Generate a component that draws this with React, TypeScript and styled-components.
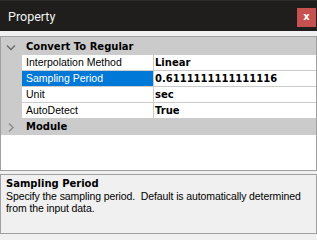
import React from "react";
import styled, { createGlobalStyle } from "styled-components";

const GlobalStyle = createGlobalStyle`
  html, body { margin: 0; padding: 0; background: #f0f0f0; }
  #root { width: 317px; height: 240px; }
  * { box-sizing: border-box; }
`;

const Window = styled.div`
  width: 317px;
  height: 240px;
  background: #f0f0f0;
  display: flex;
  flex-direction: column;
  overflow: hidden;
  font-family: "Liberation Sans", Arial, sans-serif;
`;

const TitleBar = styled.div`
  height: 31px;
  flex: none;
  border-top: 1px solid #2c2c2c;
  background: #1f1e1c;
  display: flex;
  align-items: flex-start;
  justify-content: space-between;
  padding: 0 1px 0 8px;
`;

const Title = styled.span`
  font-family: Roboto, "Liberation Sans", sans-serif;
  font-size: 12.5px;
  line-height: 14px;
  margin-top: 9px;
  color: #f2f2f2;
`;

const CloseButton = styled.div`
  width: 19px;
  height: 19px;
  margin-top: 7px;
  background: #c75050;
  color: #ffffff;
  font: bold 10px/10px "DejaVu Sans", sans-serif;
  display: flex;
  align-items: center;
  justify-content: center;
  padding-bottom: 1px;
`;

const Body = styled.div`
  flex: 1;
  display: flex;
  flex-direction: column;
  gap: 3px;
  padding-top: 5px;
`;

const Grid = styled.div`
  height: 135px;
  border: 1px solid #a0a0a0;
  background: #ffffff;
  display: flex;
  flex-direction: column;
`;

const CategoryRow = styled.div<{ $first?: boolean }>`
  height: ${(p) => (p.$first ? 18 : 16)}px;
  background: #cbcbcb;
  display: flex;
  align-items: flex-end;
`;

const CategoryToggle = styled.div`
  width: 21px;
  height: 16px;
  display: flex;
  align-items: center;
  justify-content: center;
  padding-right: 1px;
`;

const CategoryLabel = styled.span`
  font-family: "DejaVu Sans", sans-serif;
  font-weight: bold;
  font-size: 10px;
  line-height: 16px;
  color: #000;
  padding-left: 4px;
`;

const PropRow = styled.div`
  height: 16px;
  display: grid;
  grid-template-columns: 21px 132px 1fr;
  background: #cbcbcb;
`;

const NameCell = styled.div<{ $selected?: boolean }>`
  height: 15px;
  border-right: 1px solid #cbcbcb;
  background: ${(p) => (p.$selected ? "#0078d7" : "#ffffff")};
  color: ${(p) => (p.$selected ? "#ffffff" : "#000000")};
  font-size: 10.5px;
  line-height: 15px;
  padding-left: 4px;
  white-space: nowrap;
  overflow: hidden;
`;

const ValueCell = styled.div`
  height: 15px;
  background: #ffffff;
  font-family: "DejaVu Sans", sans-serif;
  font-weight: bold;
  font-size: 10px;
  line-height: 15px;
  padding-left: 1px;
  white-space: nowrap;
  overflow: hidden;
`;

const Margin = styled.div``;

const Description = styled.div`
  height: 60px;
  border: 1px solid #a0a0a0;
  background: #f0f0f0;
  padding: 2px 5px 0;
`;

const DescTitle = styled.div`
  font-family: "DejaVu Sans", sans-serif;
  font-weight: bold;
  font-size: 10px;
  line-height: 13px;
  color: #000;
`;

const DescText = styled.div`
  font-size: 10.5px;
  letter-spacing: -0.1px;
  line-height: 12px;
  color: #000;
`;

const Chevron = ({ open }: { open: boolean }) => (
  <svg width="10" height="9" viewBox="0 0 10 9">
    {open ? (
      <polyline points="1,2.5 5,6.5 9,2.5" fill="none" stroke="#6a6a6a" strokeWidth="1.4" />
    ) : (
      <polyline points="3,0.5 7,4.5 3,8.5" fill="none" stroke="#8a8a8a" strokeWidth="1.4" />
    )}
  </svg>
);

const rows = [
  { name: "Interpolation Method", value: "Linear" },
  { name: "Sampling Period", value: "0.6111111111111116", selected: true },
  { name: "Unit", value: "sec" },
  { name: "AutoDetect", value: "True" },
];

export default function App() {
  return (
    <>
      <GlobalStyle />
      <Window>
        <TitleBar>
          <Title>Property</Title>
          <CloseButton>x</CloseButton>
        </TitleBar>
        <Body>
          <Grid>
            <CategoryRow $first>
              <CategoryToggle>
                <Chevron open />
              </CategoryToggle>
              <CategoryLabel>Convert To Regular</CategoryLabel>
            </CategoryRow>
            {rows.map((r) => (
              <PropRow key={r.name}>
                <Margin />
                <NameCell $selected={r.selected}>{r.name}</NameCell>
                <ValueCell>{r.value}</ValueCell>
              </PropRow>
            ))}
            <CategoryRow>
              <CategoryToggle>
                <Chevron open={false} />
              </CategoryToggle>
              <CategoryLabel>Module</CategoryLabel>
            </CategoryRow>
          </Grid>
          <Description>
            <DescTitle>Sampling Period</DescTitle>
            <DescText>
              Specify the sampling period.&nbsp; Default is automatically determined from the input data.
            </DescText>
          </Description>
        </Body>
      </Window>
    </>
  );
}
